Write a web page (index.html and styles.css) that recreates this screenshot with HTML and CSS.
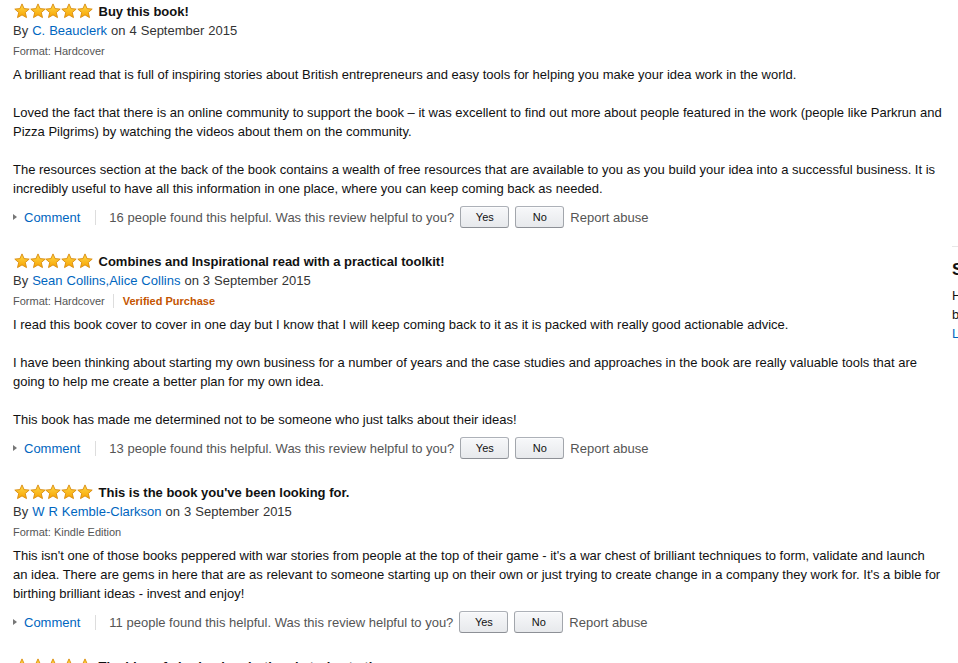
FILE: index.html
```html
<!DOCTYPE html>
<html>
<head>
<meta charset="utf-8">
<link rel="stylesheet" href="styles.css">
</head>
<body>
<svg width="0" height="0" class="defs">
  <defs>
    <linearGradient id="sg" x1="0" y1="0" x2="0" y2="1">
      <stop offset="0" stop-color="#ffd94a"/>
      <stop offset="1" stop-color="#f7a300"/>
    </linearGradient>
    <symbol id="star" viewBox="0 0 16 16">
      <path d="M8 0.9 L10.1 5.6 L15.2 6.1 L11.3 9.5 L12.5 14.6 L8 11.9 L3.5 14.6 L4.7 9.5 L0.8 6.1 L5.9 5.6 Z" fill="url(#sg)" stroke="#d88a0c" stroke-width="0.9" stroke-linejoin="round"/>
    </symbol>
  </defs>
</svg>
<div class="page">
  <main class="reviews">
    <section class="review">
      <div class="title-row">
        <span class="stars"><svg><use href="#star"/></svg><svg><use href="#star"/></svg><svg><use href="#star"/></svg><svg><use href="#star"/></svg><svg><use href="#star"/></svg></span>
        <span class="title">Buy this book!</span>
      </div>
      <div class="byline">By <a href="#">C. Beauclerk</a> on 4 September 2015</div>
      <div class="format">Format: Hardcover</div>
      <div class="body">A brilliant read that is full of inspiring stories about British entrepreneurs and easy tools for helping you make your idea work in the world.<br><br>Loved the fact that there is an online community to support the book – it was excellent to find out more about people featured in the work (people like Parkrun and Pizza Pilgrims) by watching the videos about them on the community.<br><br>The resources section at the back of the book contains a wealth of free resources that are available to you as you build your idea into a successful business. It is incredibly useful to have all this information in one place, where you can keep coming back as needed.</div>
      <div class="footer">
        <span class="tri"></span><a href="#" class="comment">Comment</a><span class="sep"></span>
        <span class="helpful">16 people found this helpful. Was this review helpful to you?</span>
        <button class="btn">Yes</button><button class="btn">No</button>
        <span class="report">Report abuse</span>
      </div>
    </section>

    <section class="review">
      <div class="title-row">
        <span class="stars"><svg><use href="#star"/></svg><svg><use href="#star"/></svg><svg><use href="#star"/></svg><svg><use href="#star"/></svg><svg><use href="#star"/></svg></span>
        <span class="title">Combines and Inspirational read with a practical toolkit!</span>
      </div>
      <div class="byline">By <a href="#">Sean Collins,Alice Collins</a> on 3 September 2015</div>
      <div class="format">Format: Hardcover<span class="vsep"></span><span class="verified">Verified Purchase</span></div>
      <div class="body">I read this book cover to cover in one day but I know that I will keep coming back to it as it is packed with really good actionable advice.<br><br>I have been thinking about starting my own business for a number of years and the case studies and approaches in the book are really valuable tools that are going to help me create a better plan for my own idea.<br><br>This book has made me determined not to be someone who just talks about their ideas!</div>
      <div class="footer">
        <span class="tri"></span><a href="#" class="comment">Comment</a><span class="sep"></span>
        <span class="helpful">13 people found this helpful. Was this review helpful to you?</span>
        <button class="btn">Yes</button><button class="btn">No</button>
        <span class="report">Report abuse</span>
      </div>
    </section>

    <section class="review">
      <div class="title-row">
        <span class="stars"><svg><use href="#star"/></svg><svg><use href="#star"/></svg><svg><use href="#star"/></svg><svg><use href="#star"/></svg><svg><use href="#star"/></svg></span>
        <span class="title">This is the book you've been looking for.</span>
      </div>
      <div class="byline">By <a href="#">W R Kemble-Clarkson</a> on 3 September 2015</div>
      <div class="format">Format: Kindle Edition</div>
      <div class="body">This isn't one of those books peppered with war stories from people at the top of their game - it's a war chest of brilliant techniques to form, validate and launch an idea. There are gems in here that are as relevant to someone starting up on their own or just trying to create change in a company they work for. It's a bible for birthing brilliant ideas - invest and enjoy!</div>
      <div class="footer">
        <span class="tri"></span><a href="#" class="comment">Comment</a><span class="sep"></span>
        <span class="helpful">11 people found this helpful. Was this review helpful to you?</span>
        <button class="btn">Yes</button><button class="btn">No</button>
        <span class="report">Report abuse</span>
      </div>
    </section>

    <section class="review">
      <div class="title-row">
        <span class="stars"><svg><use href="#star"/></svg><svg><use href="#star"/></svg><svg><use href="#star"/></svg><svg><use href="#star"/></svg><svg><use href="#star"/></svg></span>
        <span class="title">The idea of sharing inspirational stories to the</span>
      </div>
    </section>
  </main>

  <aside class="side">
    <h3>Share your thoughts</h3>
    <p>Have you read this book?</p>
    <p>before buying it?</p>
    <p><a href="#">Learn more</a></p>
  </aside>
</div>
</body>
</html>
```

FILE: styles.css
```css
html, body {
  margin: 0;
  padding: 0;
  background: #fff;
  overflow: hidden;
}

body {
  font-family: "Liberation Sans", Arial, sans-serif;
  font-size: 13px;
  line-height: 19px;
  color: #111;
}

.defs {
  position: absolute;
  width: 0;
  height: 0;
}

.page {
  display: flex;
  width: 958px;
  overflow: hidden;
  padding-top: 1px;
}

.reviews {
  flex: 0 0 929px;
  padding-left: 13px;
}

.review {
  margin-bottom: 23px;
}

.title-row {
  display: flex;
  align-items: center;
  height: 20px;
}

.stars {
  display: flex;
  margin-right: 6px;
  margin-left: 1px;
}

.stars svg {
  width: 16px;
  height: 16px;
  display: block;
  margin-right: -0.3px;
}

.title {
  font-weight: bold;
  color: #111;
}

.byline {
  color: #333;
  line-height: 20px;
  word-spacing: 0.4px;
}

a {
  color: #0066c0;
  text-decoration: none;
}

.format {
  font-size: 11px;
  line-height: 20px;
  height: 20px;
  color: #555;
  display: flex;
  align-items: center;
}

.vsep {
  display: inline-block;
  width: 1px;
  height: 14px;
  background: #ddd;
  margin: 0 9px 0 8px;
}

.verified {
  color: #c45500;
  font-weight: bold;
}

.body {
  margin-top: 4px;
  color: #111;
}

.footer {
  margin-top: 8px;
  display: flex;
  align-items: center;
  height: 22px;
  color: #555;
}

.tri {
  width: 0;
  height: 0;
  border-top: 3px solid transparent;
  border-bottom: 3px solid transparent;
  border-left: 4px solid #777;
  margin-right: 7px;
}

.comment {
  color: #0066c0;
}

.sep {
  width: 1px;
  height: 15px;
  background: #ddd;
  margin: 0 13px 0 15px;
}

.helpful {
  color: #555;
  margin-right: 6px;
}

.btn {
  width: 49px;
  height: 22px;
  margin: 0 6px 0 0;
  padding: 0;
  font-family: "Liberation Sans", Arial, sans-serif;
  font-size: 11px;
  color: #111;
  border: 1px solid;
  border-color: #adb1b8 #a2a6ac #8d9096;
  border-radius: 3px;
  background: linear-gradient(to bottom, #f7f8fa, #e7e9ec);
  box-shadow: inset 0 1px 0 rgba(255,255,255,0.6);
}

.report {
  color: #555;
}

.side {
  flex: 0 0 200px;
  margin-left: 10px;
  margin-top: 245px;
  border-top: 1px solid #e7e7e7;
  padding-top: 11px;
}

.side h3 {
  margin: 0 0 4px;
  font-size: 17px;
  line-height: 24px;
  font-weight: bold;
  color: #111;
}

.side p {
  margin: 0;
  line-height: 19px;
}
```
